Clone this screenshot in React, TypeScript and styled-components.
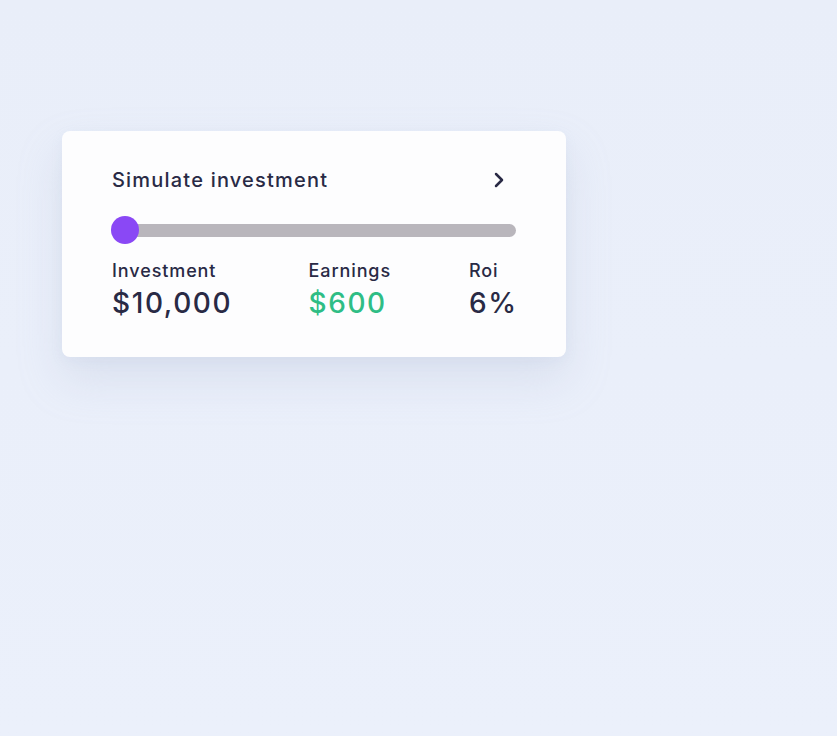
import React from "react";
import styled, { createGlobalStyle } from "styled-components";
import { ChevronRight } from "lucide-react";

const GlobalStyle = createGlobalStyle`
  html, body { margin: 0; padding: 0; }
  body {
    background: #eaeff9;
    font-family: Inter, "Noto Sans", "Liberation Sans", sans-serif;
    -webkit-font-smoothing: antialiased;
  }
`;

const Page = styled.div`
  min-height: 736px;
  box-sizing: border-box;
  padding: 131px 0 0 62px;
  background: linear-gradient(180deg, #e9eef9 0%, #ebf0fb 100%);
`;

const Card = styled.section`
  width: 504px;
  box-sizing: border-box;
  padding: 37px 50px 37px 50px;
  background: #fdfdfe;
  border-radius: 8px;
  box-shadow: 0 22px 44px rgba(170, 182, 210, 0.26), 0 4px 12px rgba(170, 182, 210, 0.1);
  color: #292a45;
`;

const Header = styled.div`
  display: flex;
  align-items: center;
  justify-content: space-between;
  height: 24px;
`;

const Title = styled.h2`
  margin: 0;
  font-size: 20px;
  line-height: 24px;
  font-weight: 500;
  letter-spacing: 1.2px;
`;

const IconBtn = styled.span`
  display: flex;
  margin-right: 5px;
  color: #292a45;
`;

const SliderRow = styled.div`
  position: relative;
  display: flex;
  align-items: center;
  height: 28px;
  margin-top: 24px;
`;

const Track = styled.div`
  width: 100%;
  height: 13px;
  border-radius: 7px;
  background: #b9b6bc;
`;

const Thumb = styled.div`
  position: absolute;
  left: -1px;
  top: 0;
  width: 28px;
  height: 28px;
  border-radius: 50%;
  background: #8a48f5;
`;

const Stats = styled.div`
  display: flex;
  justify-content: space-between;
  margin-top: 16px;
`;

const Stat = styled.div`
  display: flex;
  flex-direction: column;
  gap: 4px;
`;

const Label = styled.span`
  font-size: 18px;
  line-height: 22px;
  font-weight: 500;
  letter-spacing: 0.9px;
`;

const Value = styled.span<{ $accent?: boolean }>`
  font-size: 28px;
  line-height: 34px;
  font-weight: 500;
  letter-spacing: 1.6px;
  margin-right: -1.6px;
  color: ${(p) => (p.$accent ? "#2fbd85" : "#292a45")};
`;

export default function App() {
  return (
    <>
      <GlobalStyle />
      <Page>
        <Card>
          <Header>
            <Title>Simulate investment</Title>
            <IconBtn>
              <ChevronRight size={24} strokeWidth={2.5} />
            </IconBtn>
          </Header>
          <SliderRow>
            <Track />
            <Thumb />
          </SliderRow>
          <Stats>
            <Stat>
              <Label>Investment</Label>
              <Value>$10,000</Value>
            </Stat>
            <Stat>
              <Label>Earnings</Label>
              <Value $accent>$600</Value>
            </Stat>
            <Stat>
              <Label>Roi</Label>
              <Value>6%</Value>
            </Stat>
          </Stats>
        </Card>
      </Page>
    </>
  );
}
